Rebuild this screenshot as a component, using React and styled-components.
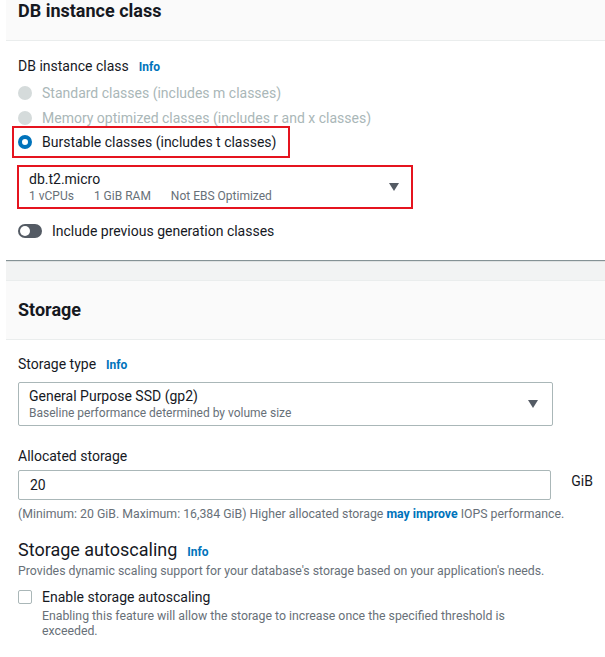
import styled, { createGlobalStyle } from 'styled-components';

const GlobalStyle = createGlobalStyle`
    body {
        margin: 0;
        background: #ffffff;
        font-family: Roboto, "Liberation Sans", Arial, sans-serif;
        color: #16191f;
        -webkit-font-smoothing: antialiased;
    }
`

const Page = styled.main`
    margin-left: 6px;
    background: #f2f3f3;
    min-height: 657px;
    overflow: hidden;
`

const Panel = styled.section`
    background: #ffffff;
    border-top: ${({ first }) => first ? 'none' : '1px solid #eaeded'};
    margin-top: ${({ first }) => first ? '0' : '20px'};
    box-shadow: 0 1px 1px 0 rgba(0, 28, 36, 0.45);
`

const PanelHeader = styled.header`
    background: #fafafa;
    border-bottom: 1px solid #eaeded;
    padding: ${({ compact }) => compact ? '0 12px 18px' : '18px 12px'};
    h2 {
        margin: 0;
        font-size: 18px;
        line-height: 22px;
        font-weight: 700;
        color: #16191f;
    }
`

const PanelBody = styled.div`
    padding: ${({ top }) => top || 14}px 12px ${({ bottom }) => bottom || 18}px;
`

const Label = styled.div`
    display: flex;
    align-items: baseline;
    gap: 10px;
    font-size: 14px;
    line-height: 22px;
    margin-bottom: ${({ space }) => space || 0}px;
`

const Info = styled.a`
    color: #0073bb;
    font-size: 12px;
    font-weight: 700;
    text-decoration: none;
`

const RadioGroup = styled.div`
    display: flex;
    flex-direction: column;
    align-items: flex-start;
    margin-top: 2px;
`

const RadioRow = styled.label`
    display: inline-flex;
    align-items: center;
    gap: 10px;
    height: 25px;
    font-size: 14px;
    color: ${({ disabled }) => disabled ? '#aab7b8' : '#16191f'};
    ${({ highlighted }) => highlighted && `
        box-sizing: border-box;
        height: 32px;
        border: 2px solid #e5141f;
        margin: -4px 0 -3px -6px;
        padding: 0 12px 0 4px;
    `}
`

const Radio = styled.span`
    box-sizing: border-box;
    width: 14px;
    height: 14px;
    border-radius: 50%;
    flex-shrink: 0;
    background: ${({ checked }) => checked ? '#ffffff' : '#d5dbdb'};
    border: ${({ checked }) => checked ? '4.5px solid #0073bb' : 'none'};
`

const Select = styled.div`
    box-sizing: border-box;
    display: flex;
    align-items: center;
    justify-content: space-between;
    width: ${({ width }) => width}px;
    border: ${({ highlighted }) => highlighted ? '2px solid #e5141f' : '1px solid #aab7b8'};
    border-radius: ${({ highlighted }) => highlighted ? '0' : '2px'};
    margin: ${({ highlighted }) => highlighted ? '10px 0 0 -1px' : '0'};
    padding: ${({ highlighted }) => highlighted ? '3px 12px 3px 10px' : '4px 14px 4px 10px'};
`

const SelectText = styled.div`
    display: flex;
    flex-direction: column;
`

const SelectValue = styled.span`
    font-size: 14px;
    line-height: 18px;
    color: #16191f;
`

const SelectMeta = styled.div`
    display: flex;
    gap: 20px;
    font-size: 12px;
    line-height: 16px;
    color: #687078;
`

const Caret = () => (
    <svg width="10" height="8" viewBox="0 0 10 8">
        <path d="M0 0 H10 L5 8 Z" fill="#545b64" />
    </svg>
)

const ToggleRow = styled.label`
    display: flex;
    align-items: center;
    gap: 10px;
    margin-top: 11px;
    font-size: 14px;
    line-height: 22px;
`

const Toggle = styled.span`
    position: relative;
    width: 24px;
    height: 14px;
    border-radius: 7px;
    background: #545b64;
    flex-shrink: 0;
    &::after {
        content: '';
        position: absolute;
        left: 2px;
        top: 2px;
        width: 10px;
        height: 10px;
        border-radius: 50%;
        background: #ffffff;
    }
`

const Field = styled.div`
    margin-bottom: ${({ space }) => space || 0}px;
`

const InputRow = styled.div`
    display: flex;
    align-items: center;
    gap: 20px;
    margin-top: 3px;
    span {
        font-size: 14px;
        margin-top: -8px;
    }
`

const Input = styled.input`
    box-sizing: border-box;
    width: 535px;
    height: 30px;
    border: 1px solid #aab7b8;
    border-radius: 2px;
    padding: 0 11px;
    font-family: inherit;
    font-size: 14px;
    color: #16191f;
    outline: none;
`

const Help = styled.p`
    margin: ${({ flush }) => flush ? '1px 0 0' : '6px 0 0'};
    font-size: 12.3px;
    line-height: 16px;
    color: #687078;
    b {
        color: #0073bb;
    }
`

const SubHeading = styled.div`
    display: flex;
    align-items: baseline;
    gap: 10px;
    margin-top: 16px;
    h3 {
        margin: 0;
        font-size: 18px;
        line-height: 24px;
        font-weight: 400;
    }
`

const Checkbox = styled.span`
    box-sizing: border-box;
    width: 14px;
    height: 14px;
    border: 1px solid #aab7b8;
    border-radius: 2px;
    flex-shrink: 0;
    margin-top: 4px;
`

const CheckRow = styled.label`
    display: flex;
    align-items: flex-start;
    gap: 10px;
    margin-top: 7px;
    div {
        font-size: 14px;
        line-height: 22px;
    }
    p {
        margin: 1px 0 0;
        width: 470px;
        font-size: 12.3px;
        line-height: 15px;
        color: #687078;
    }
`

const classes = [
    { label: 'Standard classes (includes m classes)', disabled: true },
    { label: 'Memory optimized classes (includes r and x classes)', disabled: true },
    { label: 'Burstable classes (includes t classes)', checked: true, highlighted: true },
]

export default function App() {
    return (
        <>
            <GlobalStyle />
            <Page>
                <Panel first>
                    <PanelHeader compact>
                        <h2>DB instance class</h2>
                    </PanelHeader>
                    <PanelBody>
                        <Label>DB instance class <Info>Info</Info></Label>
                        <RadioGroup>
                            {classes.map(c => (
                                <RadioRow key={c.label} disabled={c.disabled} highlighted={c.highlighted}>
                                    <Radio checked={c.checked} />
                                    {c.label}
                                </RadioRow>
                            ))}
                        </RadioGroup>
                        <Select highlighted width={396}>
                            <SelectText>
                                <SelectValue>db.t2.micro</SelectValue>
                                <SelectMeta>
                                    <span>1 vCPUs</span>
                                    <span>1 GiB RAM</span>
                                    <span>Not EBS Optimized</span>
                                </SelectMeta>
                            </SelectText>
                            <Caret />
                        </Select>
                        <ToggleRow>
                            <Toggle />
                            Include previous generation classes
                        </ToggleRow>
                    </PanelBody>
                </Panel>

                <Panel>
                    <PanelHeader>
                        <h2>Storage</h2>
                    </PanelHeader>
                    <PanelBody top={13} bottom={20}>
                        <Field space={19}>
                            <Label space={6}>Storage type <Info>Info</Info></Label>
                            <Select width={535}>
                                <SelectText>
                                    <SelectValue>General Purpose SSD (gp2)</SelectValue>
                                    <SelectMeta>Baseline performance determined by volume size</SelectMeta>
                                </SelectText>
                                <Caret />
                            </Select>
                        </Field>
                        <Field>
                            <Label>Allocated storage</Label>
                            <InputRow>
                                <Input defaultValue="20" />
                                <span>GiB</span>
                            </InputRow>
                            <Help>(Minimum: 20 GiB. Maximum: 16,384 GiB) Higher allocated storage <b>may improve</b> IOPS performance.</Help>
                        </Field>
                        <SubHeading>
                            <h3>Storage autoscaling</h3>
                            <Info>Info</Info>
                        </SubHeading>
                        <Help flush>Provides dynamic scaling support for your database's storage based on your application's needs.</Help>
                        <CheckRow>
                            <Checkbox />
                            <div>
                                Enable storage autoscaling
                                <p>Enabling this feature will allow the storage to increase once the specified threshold is exceeded.</p>
                            </div>
                        </CheckRow>
                    </PanelBody>
                </Panel>
            </Page>
        </>
    );
}
